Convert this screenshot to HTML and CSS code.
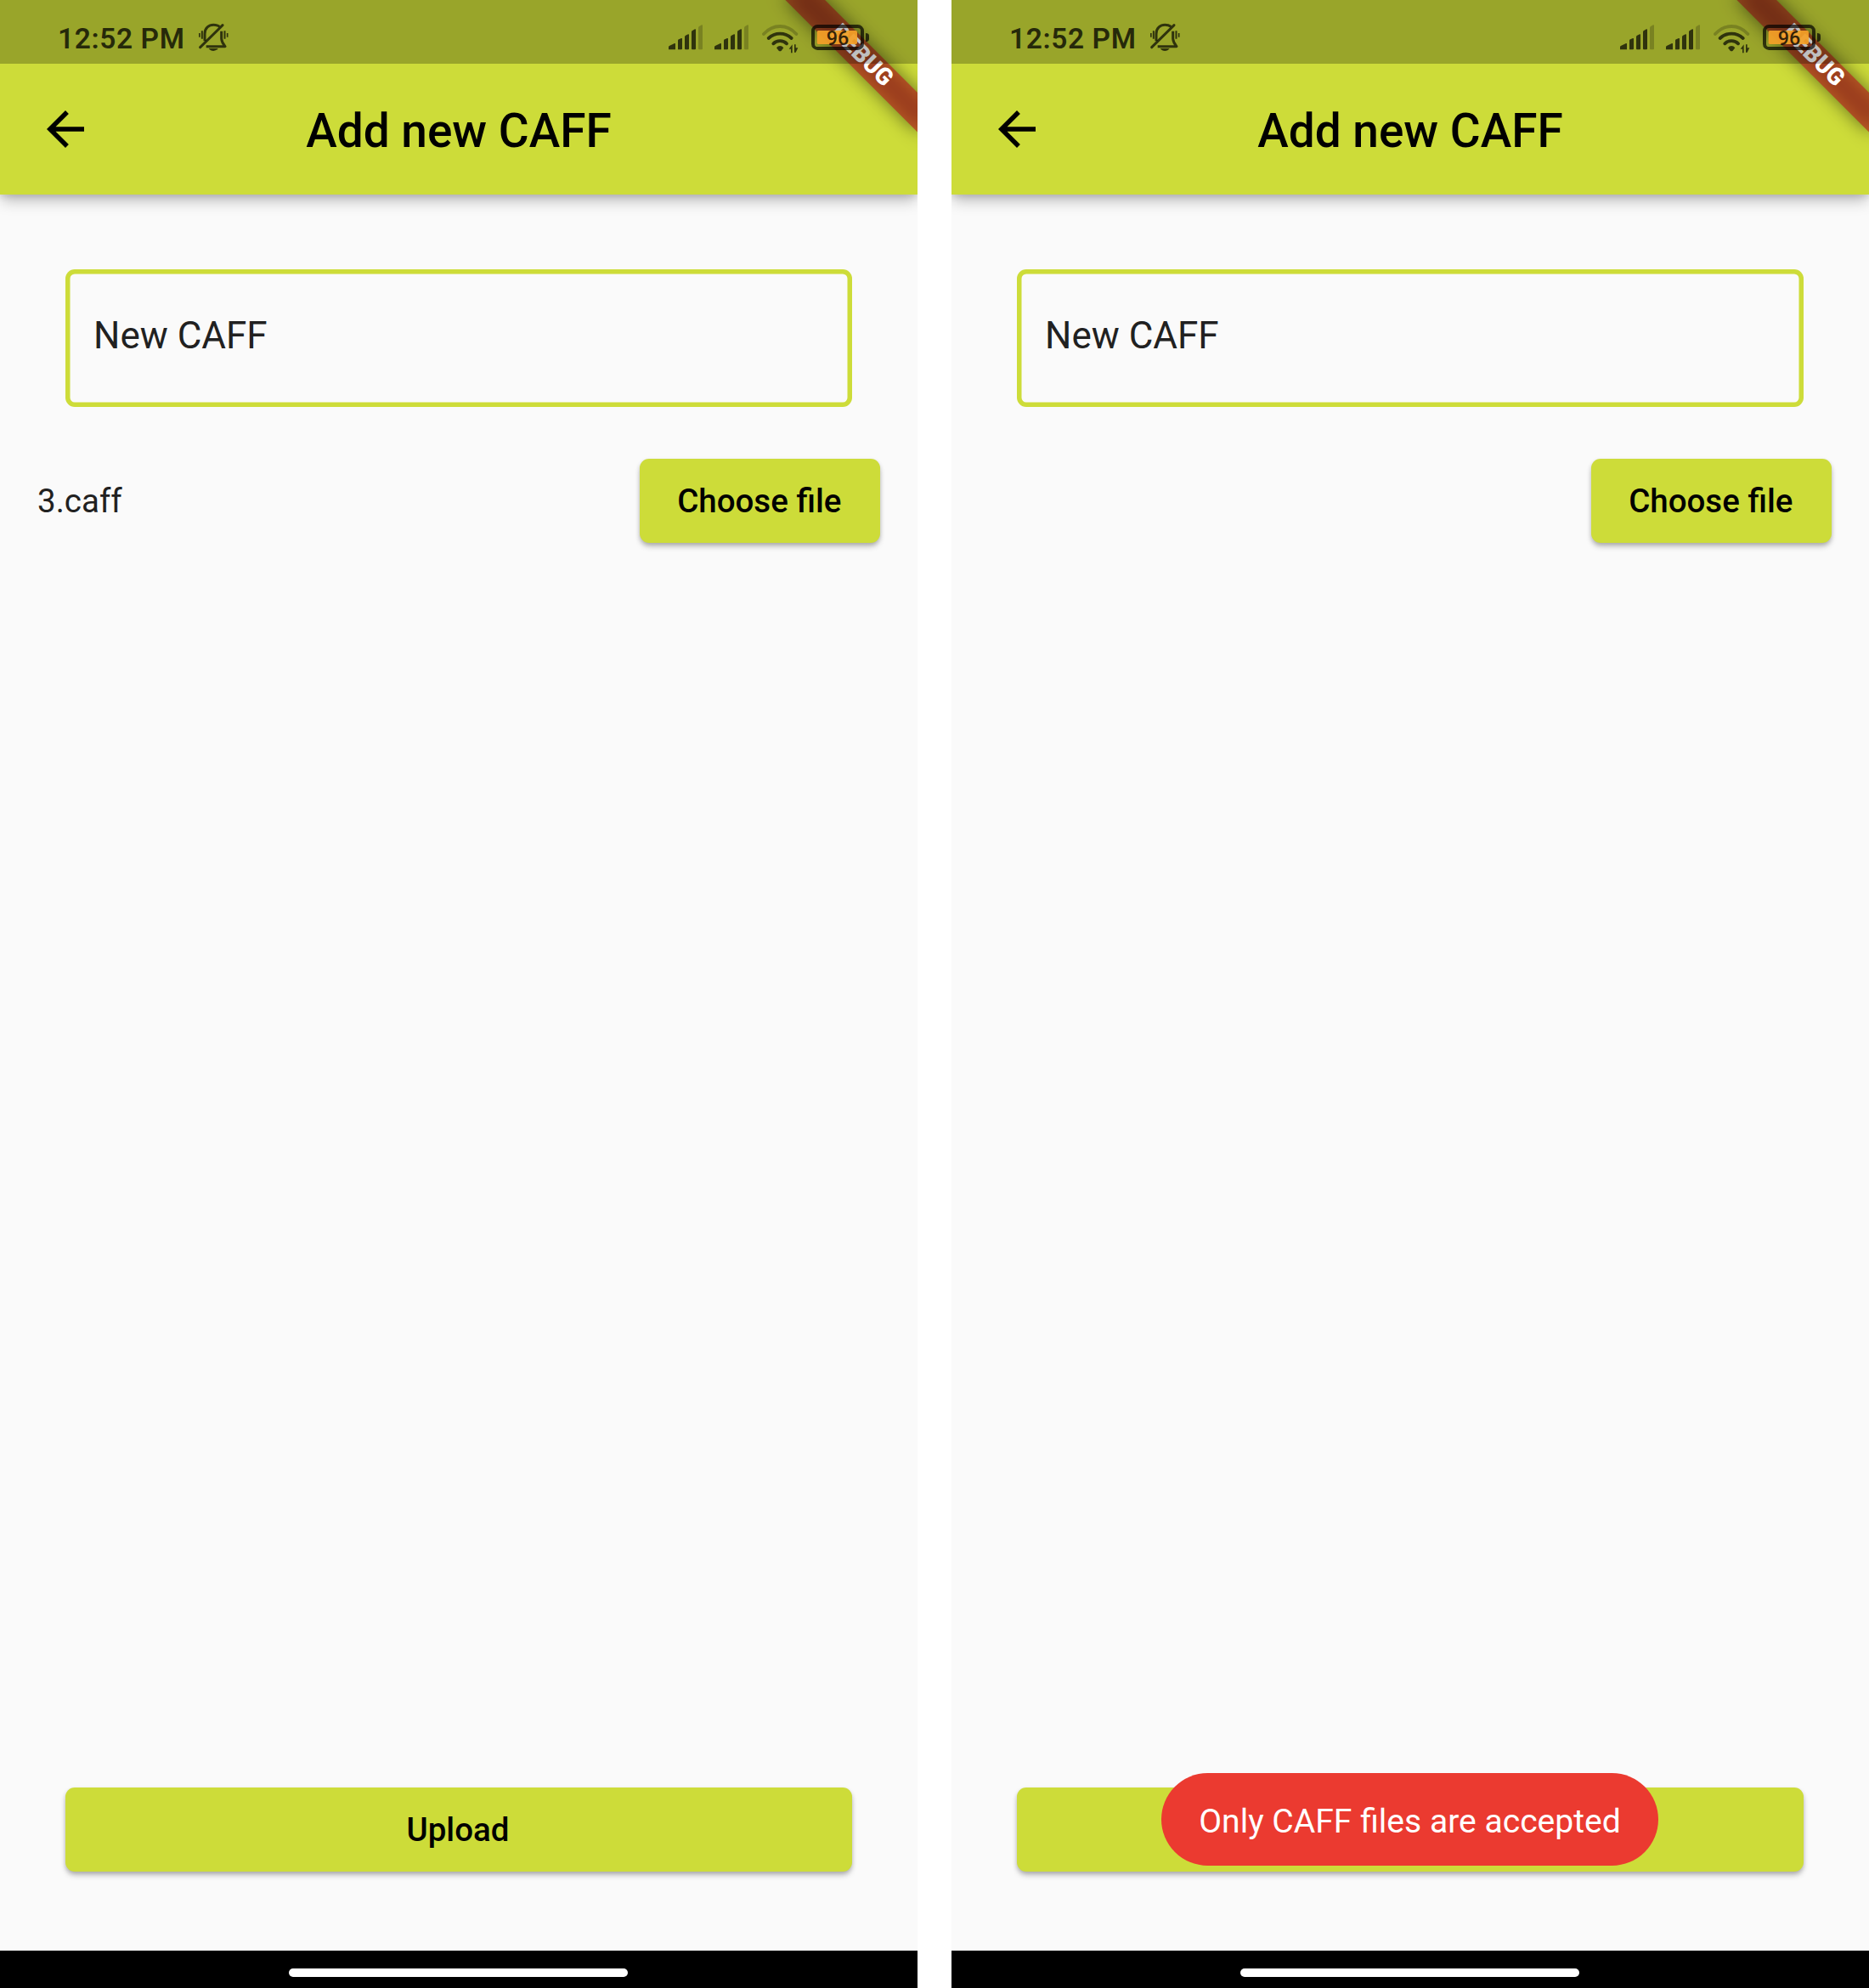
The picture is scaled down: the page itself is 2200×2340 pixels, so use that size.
FILE: index.html
```html
<!DOCTYPE html>
<html lang="en">
<head>
<meta charset="utf-8">
<title>Add new CAFF</title>
<link rel="stylesheet" href="styles.css">
</head>
<body>
<svg class="defs" width="0" height="0" aria-hidden="true">
  <symbol id="bell-off" viewBox="576 78 114 108">
    <g fill="none" stroke="currentColor" stroke-width="9">
      <path d="M603 145V120C603 98 618 88 634 88Q646 88 655 94"/>
      <path d="M587 167L666 89" stroke-linecap="round"/>
      <path d="M662 110V137Q663 150 675 164H608" stroke-linejoin="round"/>
      <path d="M584.500 117V131M683 117V131" stroke-width="5"/>
      <path d="M593.500 109V137M673.500 109V137" stroke-width="6"/>
    </g>
    <path d="M617 171H650Q644 180 633.500 180Q623 180 617 171Z" fill="currentColor"/>
  </symbol>
  <symbol id="signal" viewBox="81 86 120 90">
    <g fill="currentColor">
      <path d="M81 174V164Q82 161 85 160L102 152Q105 151 105 154V174Z"/>
      <path d="M114 174V142Q114 139 117 138L126 134Q129 133 129 136V171Q129 174 126 174Z"/>
      <path d="M138 174V129Q138 126 141 124L150 120Q153 119 153 122V171Q153 174 150 174H141Q138 174 138 171Z"/>
      <path d="M162 171V112Q162 108 165 107L174 102Q177 101 177 104V171Q177 174 174 174H165Q162 174 162 171Z"/>
      <path opacity=".3" d="M186 171V97Q186 94 189 92L198 87Q201 86 201 90V171Q201 174 198 174H189Q186 174 186 171Z"/>
    </g>
  </symbol>
  <symbol id="wifi" viewBox="408 83 132 105">
    <g fill="none" stroke="currentColor" stroke-width="11.500" stroke-linecap="round">
      <path opacity=".3" d="M417 119Q442 92 474.500 92Q507 92 532 119"/>
      <path d="M434 134Q451 118 474.500 118Q498 118 515 134"/>
      <path d="M451 153Q460 143.500 474.500 143.500Q489 143.500 498 153"/>
    </g>
    <path d="M462 168Q467 161 474.500 161Q482 161 487 168L479 178Q474.500 182 470 178Z" fill="currentColor"/>
    <path d="M518 156V186H513V172H506Z M525 156H530V168H538L530 184H525Z" fill="currentColor"/>
  </symbol>
  <symbol id="battery" viewBox="582 84 210 96">
    <rect x="605" y="108" width="142" height="48" rx="5" fill="#f4a028" opacity=".93"/>
    <rect x="591" y="93" width="174" height="78" rx="16" fill="none" stroke="currentColor" stroke-width="12"/>
    <path d="M777 117Q789 117 789 127V137Q789 147 777 147Z" fill="currentColor"/>
    <text class="battery-level" x="678" y="158" text-anchor="middle">96</text>
  </symbol>
  <symbol id="arrow-back" viewBox="4 4 16 16">
    <path d="M20 11H7.830l5.590-5.590L12 4l-8 8 8 8 1.410-1.410L7.830 13H20v-2z"/>
  </symbol>
</svg>

<main class="screens">
  <section class="phone">
    <header class="app-bar">
      <svg class="back"><use href="#arrow-back"/></svg>
      <h1 class="title">Add new CAFF</h1>
    </header>
    <div class="debug"><span>DEBUG</span></div>
    <div class="status">
      <span class="time">12:52 PM</span>
      <svg class="bell"><use href="#bell-off"/></svg>
      <div class="indicators">
        <svg class="signal"><use href="#signal"/></svg>
        <svg class="signal"><use href="#signal"/></svg>
        <svg class="wifi"><use href="#wifi"/></svg>
        <svg class="battery"><use href="#battery"/></svg>
      </div>
    </div>
    <div class="content">
      <div class="field">New CAFF</div>
      <div class="file-row">
        <span class="file-name">3.caff</span>
        <button class="btn choose">Choose file</button>
      </div>
      <button class="btn upload">Upload</button>
    </div>
    <footer class="nav"><div class="handle"></div></footer>
  </section>

  <section class="phone">
    <header class="app-bar">
      <svg class="back"><use href="#arrow-back"/></svg>
      <h1 class="title">Add new CAFF</h1>
    </header>
    <div class="debug"><span>DEBUG</span></div>
    <div class="status">
      <span class="time">12:52 PM</span>
      <svg class="bell"><use href="#bell-off"/></svg>
      <div class="indicators">
        <svg class="signal"><use href="#signal"/></svg>
        <svg class="signal"><use href="#signal"/></svg>
        <svg class="wifi"><use href="#wifi"/></svg>
        <svg class="battery"><use href="#battery"/></svg>
      </div>
    </div>
    <div class="content">
      <div class="field">New CAFF</div>
      <div class="file-row">
        <span class="file-name"></span>
        <button class="btn choose">Choose file</button>
      </div>
      <button class="btn upload"></button>
    </div>
    <div class="toast">Only CAFF files are accepted</div>
    <footer class="nav"><div class="handle"></div></footer>
  </section>
</main>
</body>
</html>
```

FILE: styles.css
```css
* { box-sizing: border-box; }

body {
  margin: 0;
  background: #fff;
  font-family: Roboto, "Liberation Sans", sans-serif;
}

.defs { position: absolute; }

.screens {
  display: flex;
  gap: 40px;
}

.phone {
  position: relative;
  display: flex;
  flex-direction: column;
  width: 1080px;
  height: 2340px;
  overflow: hidden;
  background: #fafafa;
  color: #212121;
}

/* App bar, extending under the status bar */
.app-bar {
  display: grid;
  grid-template-columns: 154px 1fr 154px;
  align-items: center;
  height: 229px;
  padding-top: 75px;
  background: #cddc39;
  box-shadow: 0 9px 16px -2px rgba(0, 0, 0, .25), 0 2px 8px rgba(0, 0, 0, .12);
  color: #000;
}

.back {
  width: 44px;
  height: 44px;
  margin-left: 55px;
}

.title {
  margin: 4px 0 0;
  font-size: 55px;
  font-weight: 500;
  line-height: 64px;
  text-align: center;
}

/* Corner ribbon */
.debug {
  position: absolute;
  top: 77px;
  left: 970px;
  width: 220px;
  height: 33px;
  transform: rotate(45deg);
  transform-origin: 110px -77px;
}

.debug::before {
  content: "";
  position: absolute;
  inset: 0;
  background: rgba(0, 0, 0, .5);
  filter: blur(10.9px);
}

.debug span {
  position: absolute;
  inset: 0;
  background: rgba(183, 28, 28, .627);
  color: #fff;
  font-size: 28px;
  font-weight: 900;
  line-height: 30px;
  text-align: center;
}

/* Translucent system status bar */
.status {
  position: absolute;
  inset: 0 0 auto;
  display: flex;
  align-items: flex-start;
  height: 75px;
  padding-left: 68px;
  background: rgba(0, 0, 0, .25);
  color: rgba(0, 0, 0, .69);
}

.time {
  width: 164px;
  padding-top: 26px;
  color: rgba(0, 0, 0, .76);
  font-size: 33.500px;
  font-weight: 600;
  line-height: 40px;
  letter-spacing: .6px;
  white-space: nowrap;
}

.bell {
  width: 38px;
  height: 36px;
  margin-top: 26px;
}

.indicators {
  display: flex;
  align-items: flex-start;
  margin-left: 517px;
  padding-top: 28px;
}

.signal {
  width: 40px;
  height: 30px;
  margin: 1px 14px 0 0;
}

.wifi {
  width: 44px;
  height: 35px;
  margin-left: 1px;
}

.battery {
  width: 70px;
  height: 32px;
  margin-left: 14px;
}

.battery-level {
  fill: rgba(0, 0, 0, .8);
  font-size: 70px;
  font-weight: 500;
}

.content {
  flex: 1;
  display: flex;
  flex-direction: column;
  padding: 88px 44px 93.500px;
}

.field {
  height: 162px;
  margin: 0 33px;
  padding: 52px 33px 0;
  border-radius: 11px;
  box-shadow: inset 0 0 0 5.500px #cddc39;
  font-size: 44px;
  line-height: 52px;
}

.file-row {
  display: flex;
  align-items: center;
  justify-content: space-between;
  margin-top: 60.500px;
  font-size: 38.500px;
}

.btn {
  display: block;
  height: 99px;
  padding: 1px 46px 0 44px;
  border: 0;
  border-radius: 11px;
  background: #cddc39;
  box-shadow: 0 5px 7px -1px rgba(0, 0, 0, .24), 0 2px 5px rgba(0, 0, 0, .14);
  color: #000;
  font: 500 38.500px/45px Roboto, "Liberation Sans", sans-serif;
  white-space: nowrap;
}

.choose {
  width: 283.500px;
  padding-right: 45px;
}

.upload {
  margin: auto 33px 0;
}

.toast {
  position: absolute;
  top: 2087px;
  left: 247px;
  width: 585px;
  height: 109px;
  border-radius: 55px;
  background: #eb3a30;
  color: #fff;
  font-size: 39.100px;
  line-height: 115px;
  text-align: center;
  white-space: nowrap;
}

.nav {
  display: flex;
  padding: 21px 0 0 340px;
  height: 44px;
  background: #000;
}

.handle {
  width: 399px;
  height: 10px;
  border-radius: 5px;
  background: #fff;
}
```
